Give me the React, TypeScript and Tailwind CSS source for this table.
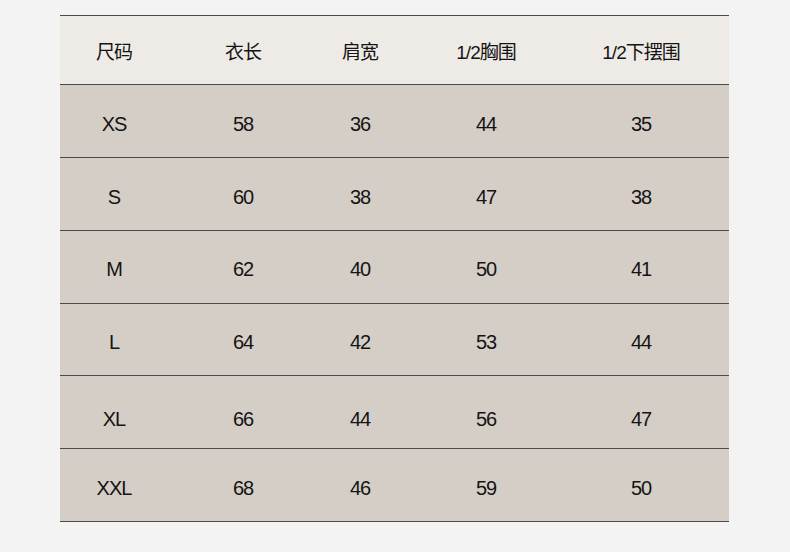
import React from 'react';

const headers = ['尺码', '衣长', '肩宽', '1/2胸围', '1/2下摆围'];

// last field: extra top padding for the row, as in the picture
const rows: [string[], string][] = [
  [['XS', '58', '36', '44', '35'], 'pt-[6px]'],
  [['S', '60', '38', '47', '38'], 'pt-[6px]'],
  [['M', '62', '40', '50', '41'], 'pt-[4px]'],
  [['L', '64', '42', '53', '44'], 'pt-[5px]'],
  [['XL', '66', '44', '56', '47'], 'pt-[14px]'],
  [['XXL', '68', '46', '59', '50'], 'pt-[6px]'],
];

const cols = 'grid grid-cols-[108px_150px_84px_168px_159px]';

export default function App() {
  return (
    <div
      className="w-[790px] h-[552px] bg-[#f3f3f3] pt-[15px] pl-[60px]"
      style={{ fontFamily: '"Liberation Sans", "Noto Sans CJK SC", sans-serif' }}
    >
      <div className="w-[669px] text-[20px] text-[#141414]">
        <div className={`${cols} h-[70px] bg-[#eeebe7] border-y border-[#4a4a4a]`}>
          {headers.map((h, i) => (
            <div
              key={h}
              className={`flex items-center justify-center pt-[6px] text-[19px] tracking-[-1px] ${i === 4 ? 'pr-[17px]' : ''}`}
            >
              {h}
            </div>
          ))}
        </div>
        {rows.map(([r, pad], ri) => (
          <div
            key={r[0]}
            className={`${cols} ${ri === 3 ? 'h-[72px]' : 'h-[73px]'} bg-[#d5cec7] border-b border-[#4a4a4a]`}
          >
            {r.map((v, i) => (
              <div
                key={i}
                className={`flex items-center justify-center tracking-[-1px] ${pad} ${i === 4 ? 'pr-[17px]' : ''}`}
              >
                {v}
              </div>
            ))}
          </div>
        ))}
      </div>
    </div>
  );
}
